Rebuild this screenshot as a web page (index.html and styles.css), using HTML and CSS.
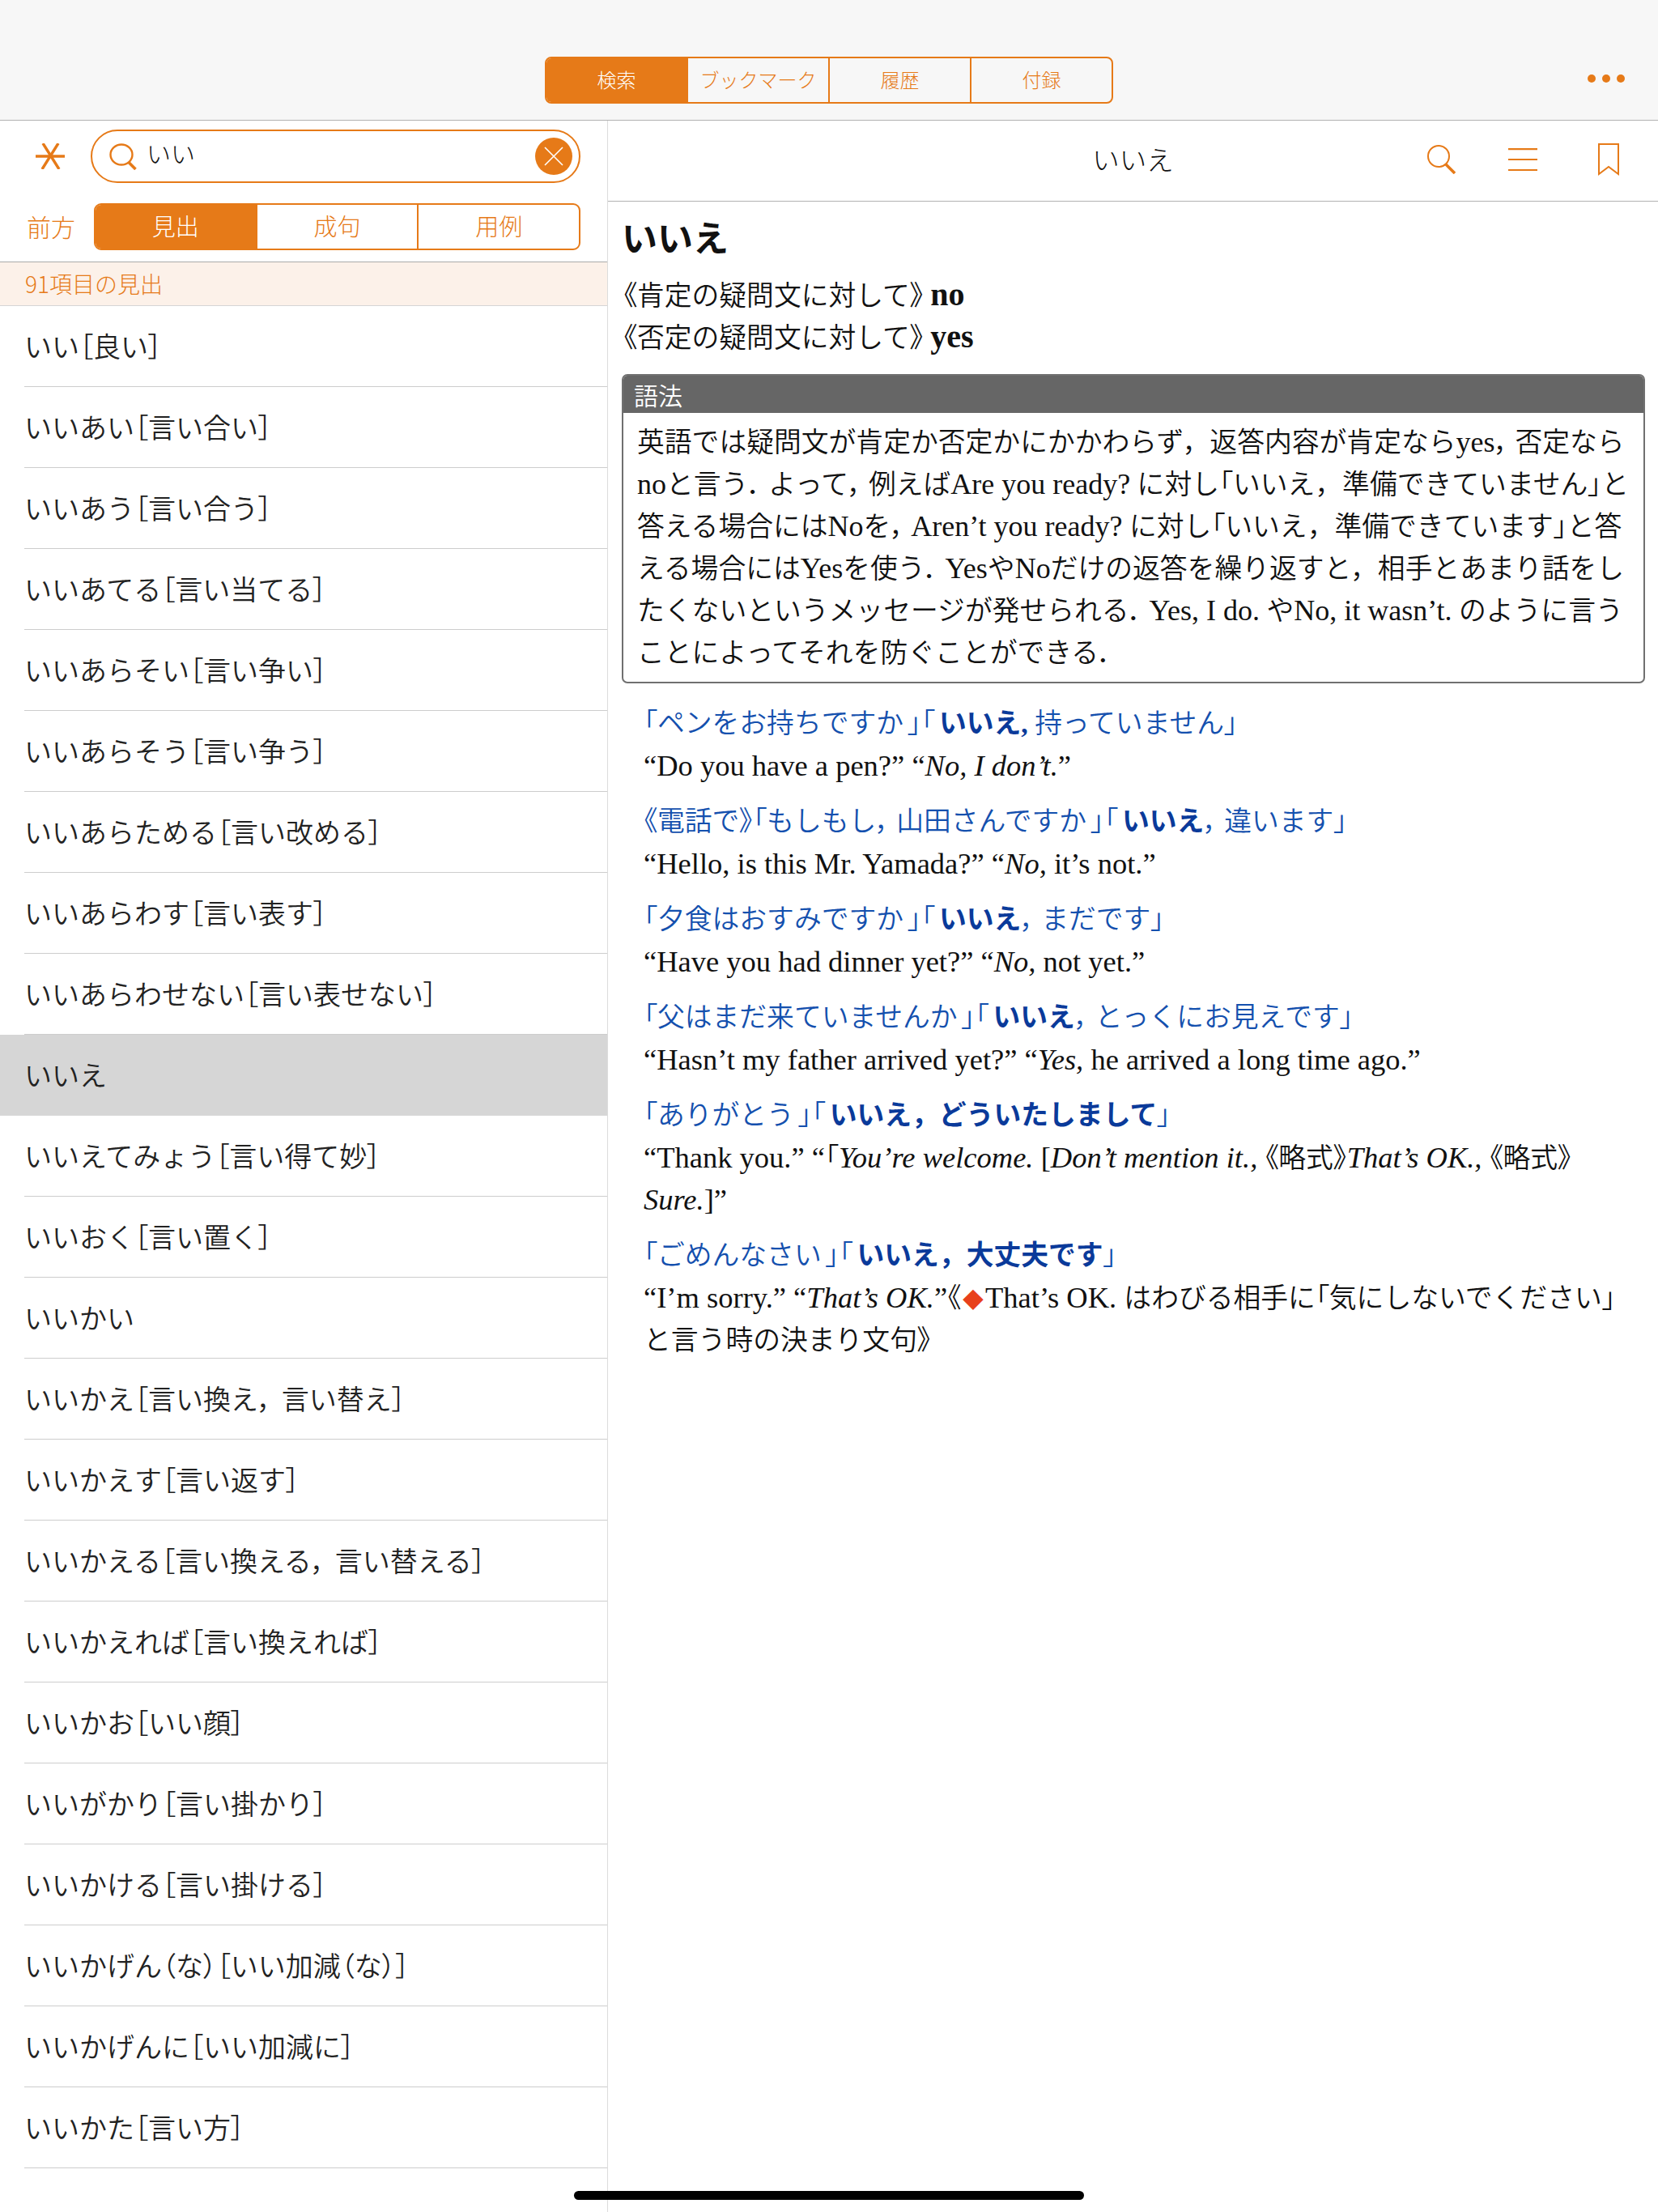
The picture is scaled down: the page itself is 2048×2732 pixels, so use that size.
FILE: index.html
```html
<!DOCTYPE html>
<html lang="ja">
<head>
    <meta charset="UTF-8">
    <title>いいえ</title>
    <link rel="stylesheet" href="styles.css">
</head>
<body>
    <!-- Top bar -->
    <header class="topbar">
        <div class="top-tabs">
            <div class="top-tab active"><span>検索</span></div>
            <div class="top-tab"><span>ブックマーク</span></div>
            <div class="top-tab"><span>履歴</span></div>
            <div class="top-tab"><span>付録</span></div>
        </div>
        <div class="more-dots"><span></span><span></span><span></span></div>
    </header>

    <div class="main">
        <!-- Sidebar -->
        <aside class="sidebar">
            <div class="search-row">
                <svg class="star-icon" width="36" height="32" viewBox="0 0 36 32">
                    <path d="M9 0 L29 32 M28 0 L8 32 M0 16 H36" fill="none" stroke="#e67a18" stroke-width="3.4"/>
                </svg>
                <div class="search-field">
                    <svg class="glass-icon" width="34" height="33" viewBox="0 0 34 33">
                        <ellipse cx="15" cy="14" rx="13.5" ry="12.5" fill="none" stroke="#e67a18" stroke-width="2.4"/>
                        <path d="M24 23.5 L32.5 32" fill="none" stroke="#e67a18" stroke-width="3.6"/>
                    </svg>
                    <span class="search-text">いい</span>
                    <div class="clear-btn">
                        <svg width="24" height="24" viewBox="0 0 24 24">
                            <path d="M1 1 L23 23 M23 1 L1 23" fill="none" stroke="#fff" stroke-width="1.6"/>
                        </svg>
                    </div>
                </div>
            </div>
            <div class="filter-row">
                <span class="filter-label">前方</span>
                <div class="filter-tabs">
                    <div class="filter-tab active"><span>見出</span></div>
                    <div class="filter-tab"><span>成句</span></div>
                    <div class="filter-tab"><span>用例</span></div>
                </div>
            </div>
            <div class="result-count"><span>91項目の見出</span></div>
            <ul class="word-list">
                <li class="word"><div class="word-label">いい<s>［</s>良い<s>］</s></div></li>
                <li class="word"><div class="word-label">いいあい<s>［</s>言い合い<s>］</s></div></li>
                <li class="word"><div class="word-label">いいあう<s>［</s>言い合う<s>］</s></div></li>
                <li class="word"><div class="word-label">いいあてる<s>［</s>言い当てる<s>］</s></div></li>
                <li class="word"><div class="word-label">いいあらそい<s>［</s>言い争い<s>］</s></div></li>
                <li class="word"><div class="word-label">いいあらそう<s>［</s>言い争う<s>］</s></div></li>
                <li class="word"><div class="word-label">いいあらためる<s>［</s>言い改める<s>］</s></div></li>
                <li class="word"><div class="word-label">いいあらわす<s>［</s>言い表す<s>］</s></div></li>
                <li class="word"><div class="word-label">いいあらわせない<s>［</s>言い表せない<s>］</s></div></li>
                <li class="word selected"><div class="word-label">いいえ</div></li>
                <li class="word"><div class="word-label">いいえてみょう<s>［</s>言い得て妙<s>］</s></div></li>
                <li class="word"><div class="word-label">いいおく<s>［</s>言い置く<s>］</s></div></li>
                <li class="word"><div class="word-label">いいかい</div></li>
                <li class="word"><div class="word-label">いいかえ<s>［</s>言い換え<s class="wc">，</s>言い替え<s>］</s></div></li>
                <li class="word"><div class="word-label">いいかえす<s>［</s>言い返す<s>］</s></div></li>
                <li class="word"><div class="word-label">いいかえる<s>［</s>言い換える<s class="wc">，</s>言い替える<s>］</s></div></li>
                <li class="word"><div class="word-label">いいかえれば<s>［</s>言い換えれば<s>］</s></div></li>
                <li class="word"><div class="word-label">いいかお<s>［</s>いい顔<s>］</s></div></li>
                <li class="word"><div class="word-label">いいがかり<s>［</s>言い掛かり<s>］</s></div></li>
                <li class="word"><div class="word-label">いいかける<s>［</s>言い掛ける<s>］</s></div></li>
                <li class="word"><div class="word-label">いいかげん<s>（</s>な<s>）</s><s>［</s>いい加減<s>（</s>な<s>）</s><s>］</s></div></li>
                <li class="word"><div class="word-label">いいかげんに<s>［</s>いい加減に<s>］</s></div></li>
                <li class="word"><div class="word-label">いいかた<s>［</s>言い方<s>］</s></div></li>
            </ul>
        </aside>

        <!-- Entry -->
        <main class="entry">
            <div class="entry-head">
                <div class="entry-title">いいえ</div>
                <div class="entry-tools">
                    <svg width="36" height="36" viewBox="0 0 36 36">
                        <circle cx="14" cy="14" r="13" fill="none" stroke="#e67a18" stroke-width="2"/>
                        <path d="M23 24 L34 35" fill="none" stroke="#e67a18" stroke-width="3.6"/>
                    </svg>
                    <svg width="36" height="28" viewBox="0 0 36 28">
                        <path d="M0 1.2 H36 M0 14 H36 M0 27 H36" fill="none" stroke="#e67a18" stroke-width="2.2"/>
                    </svg>
                    <svg class="bookmark-icon" width="26" height="40" viewBox="0 0 26 40">
                        <path d="M1 1 H25 V38 L13 29 L1 38 Z" fill="none" stroke="#e67a18" stroke-width="2"/>
                    </svg>
                </div>
            </div>

            <div class="entry-body">
                <h1 class="headword">いいえ</h1>
                <div class="sense"><s>《</s>肯定の疑問文に対して<s>》</s> <b>no</b></div>
                <div class="sense"><s>《</s>否定の疑問文に対して<s>》</s> <b>yes</b></div>

                <section class="usage">
                    <div class="usage-title">語法</div>
                    <div class="usage-text">
                        英語では疑問文が肯定か否定かにかかわらず，返答内容が肯定なら<u>yes</u><s class="cm">，</s>否定なら<br>
                        <u>no</u>と言う<s class="cm">．</s>よって<s class="cm">，</s>例えば<u>Are you ready?</u> に対し<s>「</s>いいえ，準備できていません<s>」</s>と<br>
                        答える場合には<u>No</u>を<s class="cm">，</s><u>Aren’t you ready?</u> に対し<s>「</s>いいえ，準備できています<s>」</s>と答<br>
                        える場合には<u>Yes</u>を使う<s class="cm">．</s><u>Yes</u>や<u>No</u>だけの返答を繰り返すと，相手とあまり話をし<br>
                        たくないというメッセージが発せられる<s class="cm">．</s><u>Yes, I do.</u> や<u>No, it wasn’t.</u> のように言う<br>
                        ことによってそれを防ぐことができる<s class="cm">．</s>
                    </div>
                </section>

                <div class="example">
                    <div class="ja"><s>「</s>ペンをお持ちですか<s class="pair">」「</s><b>いいえ,</b> 持っていません<s>」</s></div>
                    <div class="en">“Do you have a pen?” “<i>No, I don’t.</i>”</div>
                </div>
                <div class="example">
                    <div class="ja"><s>《</s>電話で<s>》「</s>もしもし<s class="cm">，</s>山田さんですか<s class="pair">」「</s><b>いいえ</b><s class="cm">，</s>違います<s>」</s></div>
                    <div class="en">“Hello, is this Mr. Yamada?” “<i>No,</i> it’s not.”</div>
                </div>
                <div class="example">
                    <div class="ja"><s>「</s>夕食はおすみですか<s class="pair">」「</s><b>いいえ</b><s class="cm">，</s>まだです<s>」</s></div>
                    <div class="en">“Have you had dinner yet?” “<i>No,</i> not yet.”</div>
                </div>
                <div class="example">
                    <div class="ja"><s>「</s>父はまだ来ていませんか<s class="pair">」「</s><b>いいえ</b><s class="cm">，</s>とっくにお見えです<s>」</s></div>
                    <div class="en">“Hasn’t my father arrived yet?” “<i>Yes,</i> he arrived a long time ago.”</div>
                </div>
                <div class="example">
                    <div class="ja"><s>「</s>ありがとう<s class="pair">」「</s><b>いいえ，どういたしまして</b><s>」</s></div>
                    <div class="en">“Thank you.” “<em>「</em><i>You’re welcome.</i> [<i>Don’t mention it.,</i> <em>《</em><small>略式</small><em>》</em><i>That’s OK.,</i> <em>《</em><small>略式</small><em>》</em><br><i>Sure.</i>]”</div>
                </div>
                <div class="example">
                    <div class="ja"><s>「</s>ごめんなさい<s class="pair">」「</s><b>いいえ，大丈夫です</b><s>」</s></div>
                    <div class="en">“I’m sorry.” “<i>That’s OK.</i>”<em>《</em><span class="diamond">◆</span>That’s OK. <small>はわびる相手に</small><em>「</em><small>気にしないでください</small><em>」</em><br><small>と言う時の決まり文句</small><em>》</em></div>
                </div>
            </div>
        </main>
    </div>

    <div class="home-bar"></div>
</body>
</html>
```

FILE: styles.css
```css
* {
    margin: 0;
    padding: 0;
    box-sizing: border-box;
}

body {
    font-family: "Noto Sans CJK JP", "Noto Sans", sans-serif;
    background: #fff;
    color: #222;
    width: 2048px;
    height: 2732px;
    overflow: hidden;
    position: relative;
}

/* Top bar */
.topbar {
    height: 149px;
    background: #f7f7f7;
    border-bottom: 1px solid #b2b2b2;
    display: flex;
    align-items: flex-start;
    padding: 70px 41px 0 673px;
    justify-content: space-between;
}

.top-tabs {
    display: flex;
    width: 702px;
    height: 58px;
    border: 2px solid #e67a18;
    border-radius: 8px;
    overflow: hidden;
}

.top-tab {
    flex: 1;
    display: flex;
    align-items: center;
    justify-content: center;
    font-size: 24px;
    font-weight: 300;
    color: #e67a18;
    border-left: 2px solid #e67a18;
}

.top-tab span {
    margin-top: -3px;
}

.top-tab:first-child {
    border-left: none;
}

.top-tab.active {
    background: #e67a18;
    color: #fff;
}

.more-dots {
    display: flex;
    gap: 8px;
    margin-top: 22px;
}

.more-dots span {
    width: 10px;
    height: 10px;
    border-radius: 50%;
    background: #e67a18;
}

.main {
    display: flex;
    height: 2583px;
}

/* Sidebar */
.sidebar {
    width: 751px;
    border-right: 1px solid #dcdcdc;
    flex-shrink: 0;
}

.search-row {
    display: flex;
    align-items: center;
    height: 89px;
    padding: 11px 33px 12px 44px;
}

.star-icon {
    flex-shrink: 0;
    margin-right: 32px;
}

.search-field {
    flex: 1;
    height: 66px;
    border: 2.5px solid #e67a18;
    border-radius: 33px;
    display: flex;
    align-items: center;
    padding: 0 8px 0 21px;
}

.glass-icon {
    flex-shrink: 0;
    margin-right: 12px;
}

.search-text {
    flex: 1;
    font-size: 30px;
    font-weight: 300;
    color: #111;
    margin-top: -10px;
}

.clear-btn {
    width: 46px;
    height: 46px;
    border-radius: 50%;
    background: #e67a18;
    display: flex;
    align-items: center;
    justify-content: center;
}

.filter-row {
    display: flex;
    align-items: center;
    height: 86px;
    padding: 0 33px 0 33px;
    border-bottom: 1px solid #aaa;
}

.filter-label {
    width: 83px;
    font-size: 30px;
    font-weight: 300;
    color: #e67a18;
    margin-top: -3px;
}

.filter-tabs {
    flex: 1;
    display: flex;
    height: 58px;
    margin-top: -2px;
    border: 2px solid #e67a18;
    border-radius: 9px;
    overflow: hidden;
}

.filter-tab {
    flex: 1;
    display: flex;
    align-items: center;
    justify-content: center;
    font-size: 29px;
    font-weight: 300;
    color: #e67a18;
    border-left: 2px solid #e67a18;
}

.filter-tab span {
    margin-top: -3px;
}

.filter-tab:first-child {
    border-left: none;
}

.filter-tab.active {
    background: #e67a18;
    color: #fff;
}

.result-count {
    height: 54px;
    display: flex;
    align-items: center;
    padding-left: 31px;
    background: #fcf1e9;
    border-bottom: 1px solid #d5d5d5;
    font-size: 28px;
    font-weight: 300;
    color: #e67a18;
}

.result-count span {
    margin-top: -2px;
}

.word-list {
    list-style: none;
}

.word.selected {
    background: #d6d6d6;
}

.word-label {
    height: 100px;
    margin-left: 30px;
    padding-bottom: 2px;
    display: flex;
    align-items: center;
    font-size: 34px;
    font-weight: 350;
    border-bottom: 1px solid #cdcdcd;
    white-space: nowrap;
}

.word.selected .word-label {
    border-bottom-color: transparent;
}

/* s is only the proportional bracket or comma here */
s, em {
    text-decoration: none;
    font-style: normal;
    font-size: 33.8px;
    font-feature-settings: "palt";
}

s.wc {
    margin-right: 12px;
}

s.cm {
    margin-right: 8px;
}

s.pair {
    margin: 0 5px;
}

/* Entry */
.entry {
    flex: 1;
    min-width: 0;
}

.entry-head {
    height: 100px;
    border-bottom: 1px solid #b2b2b2;
    display: flex;
    align-items: center;
    position: relative;
    justify-content: flex-end;
    padding: 0 48px 4px 0;
}

.entry-title {
    position: absolute;
    left: 0;
    right: 0;
    margin-top: -2px;
    text-align: center;
    font-size: 33.5px;
    font-weight: 300;
    color: #111;
}

.entry-tools {
    display: flex;
    align-items: center;
    gap: 64px;
}

.bookmark-icon {
    margin-left: 11px;
}

.entry-body {
    padding: 15px 16px 0 17px;
    font-family: "Liberation Serif", "Noto Sans CJK JP", serif;
    font-size: 33.8px;
    font-weight: 350;
    line-height: 52px;
    color: #111;
}

.entry-body b {
    font-weight: 700;
}

.sense {
    padding-left: 2px;
}

.sense b {
    font-size: 40px;
    line-height: 1;
}

.headword {
    font-family: "Noto Sans CJK JP", sans-serif;
    font-size: 44px;
    font-weight: 700;
    line-height: 56px;
    margin-bottom: 20px;
}

.usage {
    margin-top: 18px;
    border: 2px solid #707070;
    border-radius: 7px;
    overflow: hidden;
}

.usage-title {
    height: 46px;
    background: #666;
    color: #fff;
    font-family: "Noto Sans CJK JP", sans-serif;
    font-size: 30px;
    line-height: 46px;
    padding-left: 13px;
}

.usage-text {
    padding: 11px 10px 9px 17px;
    white-space: nowrap;
}

/* u is a latin run set larger than the Japanese around it */
.usage-text u {
    text-decoration: none;
    font-size: 36px;
    line-height: 1;
}

.example {
    margin-left: 27px;
    margin-top: 17px;
    white-space: nowrap;
}

.usage + .example {
    margin-top: 24px;
}

.ja {
    color: #1450ae;
}

.ja b {
    color: #0a3a9a;
}

.en {
    font-size: 36.5px;
}

.en small {
    font-size: 33.8px;
}

.en em, .en small {
    line-height: 1;
}

.diamond {
    color: #e8401c;
    font-family: "Noto Sans CJK JP", sans-serif;
    font-size: 26px;
    line-height: 1;
    padding: 0 2px;
}

/* Home indicator */
.home-bar {
    position: absolute;
    left: 709px;
    top: 2706px;
    width: 630px;
    height: 11px;
    border-radius: 6px;
    background: #000;
}
```
